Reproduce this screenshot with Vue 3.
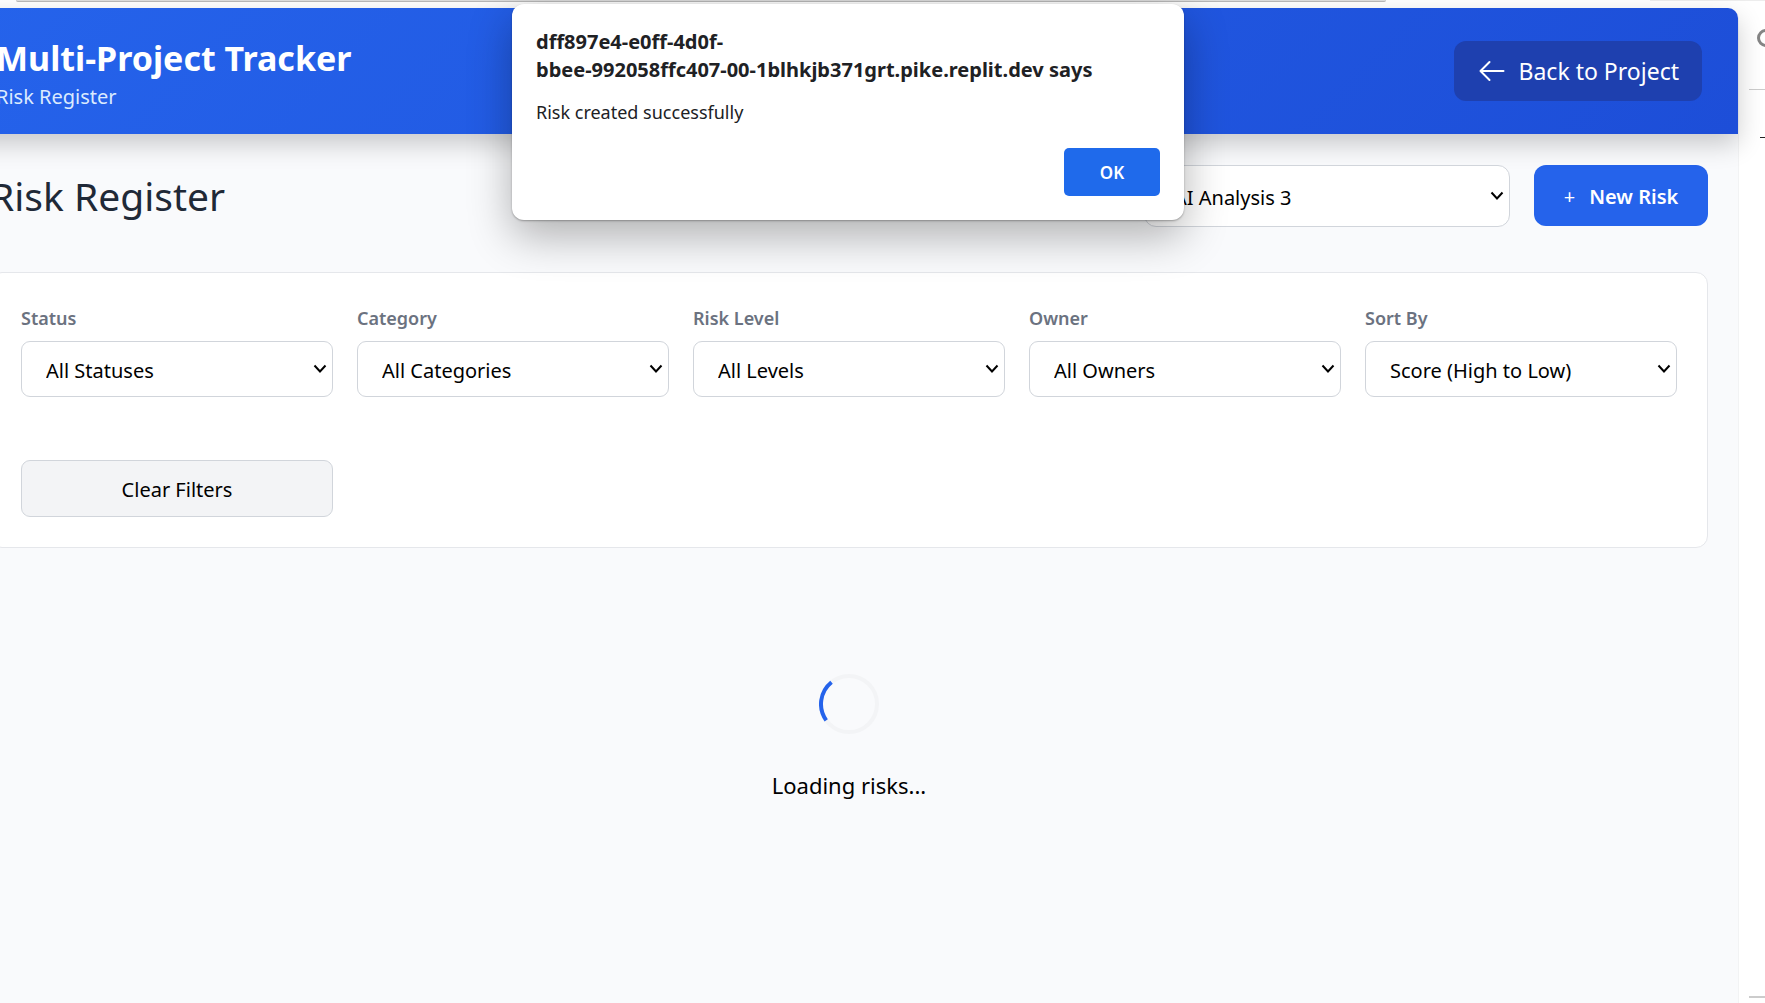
<script setup>
import { ref } from 'vue'

const project = ref('AI Analysis 3')
const filters = ref([
  { id: 'status', label: 'Status', value: 'All Statuses' },
  { id: 'category', label: 'Category', value: 'All Categories' },
  { id: 'level', label: 'Risk Level', value: 'All Levels' },
  { id: 'owner', label: 'Owner', value: 'All Owners' },
  { id: 'sort', label: 'Sort By', value: 'Score (High to Low)' },
])
</script>

<template>
  <div class="window">
    <div class="toolbar">
      <div class="address"></div>
      <div class="actions"></div>
    </div>
    <div class="body">
      <div class="page">
        <header class="header">
          <div class="titles">
            <div class="brand">Multi-Project Tracker</div>
            <div class="tagline">Risk Register</div>
          </div>
          <a class="back" href="#">
            <svg width="26" height="24" viewBox="0 0 26 24" fill="none" stroke="currentColor" stroke-width="2" stroke-linecap="round" stroke-linejoin="round" aria-hidden="true">
              <path d="M24.500 12H1.500M10.500 3L1.500 12L10.500 21" />
            </svg>
            <span>Back to Project</span>
          </a>
        </header>

        <main class="main">
          <div class="heading">
            <h1>Risk Register</h1>
            <div class="heading-tools">
              <div class="select project">
                <select v-model="project" aria-label="Project">
                  <option>AI Analysis 3</option>
                </select>
                <svg class="chevron" viewBox="0 0 14 10" aria-hidden="true"><path d="M1.500 1.500L7 7.500L12.500 1.500" /></svg>
              </div>
              <button class="new-risk" type="button"><span class="plus">+</span>New Risk</button>
            </div>
          </div>

          <section class="filters">
            <div v-for="f in filters" :key="f.id" class="field">
              <label :for="f.id">{{ f.label }}</label>
              <div class="select">
                <select :id="f.id" v-model="f.value">
                  <option>{{ f.value }}</option>
                </select>
                <svg class="chevron" viewBox="0 0 14 10" aria-hidden="true"><path d="M1.500 1.500L7 7.500L12.500 1.500" /></svg>
              </div>
            </div>
            <button class="clear" type="button">Clear Filters</button>
          </section>

          <div class="loading" role="status">
            <svg width="60" height="60" viewBox="0 0 60 60" fill="none" stroke-width="4" aria-hidden="true">
              <circle cx="30" cy="30" r="28" stroke="#f3f4f6" />
              <path d="M12.500 8.200A28 28 0 0 0 7.200 46.300" stroke="#2563eb" />
            </svg>
            <p>Loading risks...</p>
          </div>
        </main>

        <div class="dialog" role="alertdialog" aria-labelledby="dialog-title">
          <div id="dialog-title" class="dialog-title">dff897e4-e0ff-4d0f-<br>bbee-992058ffc407-00-1blhkjb371grt.pike.replit.dev says</div>
          <p>Risk created successfully</p>
          <button class="ok" type="button">OK</button>
        </div>
      </div>

      <aside class="side">
        <div class="side-search">
          <svg width="18" height="22" viewBox="0 0 18 22" fill="none" stroke="#858585" stroke-width="3" aria-hidden="true">
            <circle cx="9" cy="9" r="7.500" />
          </svg>
        </div>
        <div class="side-dash"></div>
        <div class="side-foot"></div>
      </aside>
    </div>
  </div>
</template>

<style>
body {
  margin: 0;
  background: #fff;
}
</style>

<style scoped>
* {
  box-sizing: border-box;
}
.window {
  display: flex;
  flex-direction: column;
  min-height: 100vh;
  overflow: hidden;
  font-family: "Noto Sans", "Open Sans", sans-serif;
  color: #000;
}
.toolbar {
  display: flex;
  justify-content: space-between;
  height: 8px;
  padding-left: 16px;
}
.address {
  width: 1370px;
  height: 2px;
  background: #dedede;
  border-bottom: 1px solid #b8b8b8;
  border-radius: 0 0 12px 12px;
}
.actions {
  width: 115px;
  height: 1px;
  background: #ededed;
}
.body {
  display: flex;
  flex: 1;
}
.page {
  position: relative;
  flex: 1;
  margin-left: -40px;
  background: #f9fafc;
  border-right: 1px solid #f2f3f4;
  border-top-right-radius: 12px;
}
.header {
  position: relative;
  display: flex;
  align-items: center;
  justify-content: space-between;
  height: 126px;
  padding: 0 36px;
  color: #fff;
  background: linear-gradient(135deg, #2563eb, #1d4ed8);
  border-top-right-radius: 10px;
  box-shadow: 0 10px 26px rgba(0, 0, 0, 0.2);
}
.titles {
  padding-top: 8px;
}
.brand {
  font-size: 34px;
  line-height: 44px;
  font-weight: 700;
}
.tagline {
  font-size: 20px;
  line-height: 34px;
  color: #dbeafe;
}
.back {
  display: flex;
  align-items: center;
  gap: 14px;
  height: 60px;
  padding: 0 23px 0 25px;
  font-size: 23px;
  color: #fff;
  text-decoration: none;
  background: #1e40af;
  border-radius: 12px;
}
.main {
  padding: 31px 30px;
}
.heading {
  display: flex;
  align-items: flex-start;
  justify-content: space-between;
  margin-bottom: 45px;
}
h1 {
  margin: 0;
  font-size: 39px;
  line-height: 62px;
  font-weight: 400;
  color: #1f2937;
}
.heading-tools {
  display: flex;
  align-items: flex-start;
  gap: 24px;
}
.select {
  position: relative;
}
select {
  display: block;
  width: 100%;
  height: 56px;
  padding: 2px 40px 0 24px;
  font-family: inherit;
  font-size: 20px;
  color: #000;
  background: #fff;
  border: 1px solid #d1d5db;
  border-radius: 9px;
  appearance: none;
}
.chevron {
  position: absolute;
  top: calc(50% - 5px);
  right: 6px;
  width: 14px;
  height: 10px;
  fill: none;
  stroke: #000;
  stroke-width: 2;
}
.project {
  width: 366px;
}
.project select {
  height: 62px;
  padding-left: 29px;
  border-radius: 12px;
}
button {
  font-family: inherit;
}
.new-risk {
  display: flex;
  align-items: center;
  justify-content: center;
  gap: 14px;
  width: 174px;
  height: 61px;
  padding: 2px 0 0;
  font-size: 20px;
  font-weight: 600;
  color: #fff;
  background: #2563eb;
  border: 0;
  border-radius: 12px;
}
.plus {
  font-size: 20px;
  font-weight: 400;
}
.filters {
  display: grid;
  grid-template-columns: repeat(5, 1fr);
  align-items: end;
  gap: 63px 24px;
  padding: 30px;
  background: #fff;
  border: 1px solid #e5e7eb;
  border-radius: 12px;
}
.field {
  display: flex;
  flex-direction: column;
  gap: 8px;
}
label {
  font-size: 18px;
  line-height: 30px;
  font-weight: 600;
  color: #6b7280;
}
.clear {
  height: 57px;
  padding: 2px 0 0;
  font-size: 20px;
  color: #000;
  background: #f3f4f6;
  border: 1px solid #d1d5db;
  border-radius: 9px;
}
.loading {
  display: flex;
  flex-direction: column;
  align-items: center;
  padding-top: 126px;
}
.loading p {
  margin: 34px 0 0;
  font-size: 22px;
  line-height: 34px;
}
.dialog {
  position: absolute;
  top: -4px;
  left: 50%;
  display: flex;
  flex-direction: column;
  width: 672px;
  margin-left: -337px;
  padding: 24px;
  color: #202124;
  background: #fff;
  border-radius: 12px;
  box-shadow: 0 1px 2px rgba(0, 0, 0, 0.3), 0 16px 44px rgba(0, 0, 0, 0.3);
}
.dialog-title {
  font-size: 20px;
  line-height: 28px;
  font-weight: 700;
}
.dialog p {
  margin: 14px 0 22px;
  font-size: 18px;
  line-height: 28px;
}
.ok {
  align-self: flex-end;
  width: 96px;
  height: 48px;
  font-size: 17px;
  font-weight: 600;
  color: #fff;
  background: #1f6aeb;
  border: 0;
  border-radius: 5px;
}
.side {
  display: flex;
  flex-direction: column;
  width: 26px;
  padding: 0 0 5px 10px;
  overflow: hidden;
}
.side-search {
  height: 82px;
  padding: 21px 0 0 8px;
  border-bottom: 1px solid #ccc;
}
.side-dash {
  width: 5px;
  height: 1px;
  margin: 47px 0 0 11px;
  background: #222;
}
.side-foot {
  height: 2px;
  margin-top: auto;
  background: #ccc;
}
</style>
